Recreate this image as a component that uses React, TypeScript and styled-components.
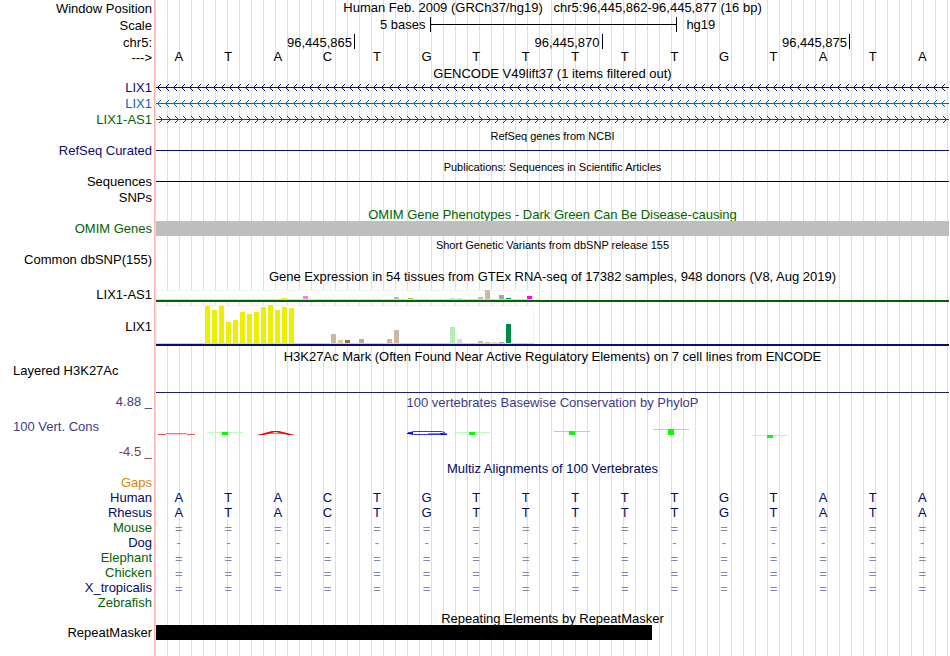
import React from "react";
import styled, { createGlobalStyle } from "styled-components";

const NAVY = "#0c0c78";
const BLUE = "#1464b4";
const GREEN = "#006400";
const INK = "#000a64";

const GlobalStyle = createGlobalStyle`
  body {
    margin: 0;
    background: #fff;
    color: #000;
    font: 13px/15px "Liberation Sans", Arial, Helvetica, sans-serif;
  }
`;

const Browser = styled.main`
  box-sizing: border-box;
  min-height: 100vh;
  padding-right: 1px;
  background:
    linear-gradient(to right, #fff 154px, #ffb4b4 154px, #ffb4b4 155px, transparent 155px),
    linear-gradient(to right, transparent 11px, #dcdcf5 11px) 156px 0 / 12px 100%;
`;

const Row = styled.section<{ $h: number }>`
  display: grid;
  grid-template-columns: 154px minmax(0, 1fr);
  align-items: start;
  height: ${(p) => p.$h}px;
`;

const Label = styled.div<{ $line?: number; $color?: string; $left?: boolean }>`
  padding: 0 2px 0 13px;
  text-align: ${(p) => (p.$left ? "left" : "right")};
  line-height: ${(p) => p.$line ?? 15}px;
  color: ${(p) => p.$color ?? "#000"};
  white-space: pre;
`;

const LabelStack = styled.div`
  display: flex;
  flex-direction: column;
  gap: 10px;
  padding-top: 1px;
`;

const Track = styled.div`
  grid-column: 2;
  padding-left: 2px;
`;

const Title = styled.h2<{ $line?: number; $color?: string; $small?: boolean; $clip?: boolean }>`
  margin: 0;
  height: ${(p) => (p.$clip ? "14px" : "auto")};
  overflow: ${(p) => (p.$clip ? "hidden" : "visible")};
  font-weight: normal;
  font-size: ${(p) => (p.$small ? 11 : 13)}px;
  line-height: ${(p) => p.$line ?? (p.$small ? 17 : 15)}px;
  color: ${(p) => p.$color ?? "#000"};
  text-align: center;
  white-space: pre;
`;

const ScaleRow = styled.div`
  grid-column: 2;
  display: grid;
  grid-template-columns: 554fr 500fr 546fr;
  padding: 0 1px;
`;

const ScaleUnit = styled.span`
  padding-right: 4px;
  text-align: right;
`;

const ScaleBar = styled.span`
  display: flex;
  align-items: center;
  height: 15px;
  border: solid #000;
  border-width: 0 1px;

  &::before {
    content: "";
    flex: 1;
    height: 1px;
    background: #000;
  }
`;

const Assembly = styled.span`
  padding-left: 9px;
`;

const Ruler = styled.div`
  grid-column: 2;
  display: grid;
  grid-template-columns: 4fr 5fr 5fr 2fr;
  padding-left: 3px;
`;

const RulerMark = styled.span`
  height: 15px;
  padding-right: 2px;
  border-right: 1px solid #000;
  line-height: 17px;
  text-align: right;
`;

const BaseRow = styled.div<{ $color?: string; $line?: number }>`
  grid-column: 2;
  display: grid;
  grid-template-columns: repeat(16, 1fr);
  padding-right: 2px;
  color: ${(p) => p.$color ?? "#000"};
  line-height: ${(p) => p.$line ?? 15}px;
  text-align: center;
`;

const Rule = styled.div<{ $color: string; $top: number }>`
  margin-top: ${(p) => p.$top}px;
  height: 1px;
  background: ${(p) => p.$color};
`;

const Block = styled.div<{ $color: string; $width: string }>`
  width: ${(p) => p.$width};
  height: 15px;
  background: ${(p) => p.$color};
`;

const Drawing = styled.svg`
  display: block;
`;

const Expression = styled.div<{ $top: number; $color: string }>`
  padding-top: ${(p) => p.$top}px;
  border-bottom: 2px solid ${(p) => p.$color};
`;

const LogoRow = styled.div`
  display: grid;
  grid-template-columns: repeat(16, minmax(0, 1fr));
`;

const LogoCell = styled.span`
  padding-left: 1px;
`;

const SEQUENCE = "ATACTGTTTTTGTATA".split("");

function Bases({ items, color, line }: { items: string[]; color?: string; line?: number }) {
  return (
    <BaseRow $color={color} $line={line}>
      {items.map((b, i) => (
        <span key={i}>{b}</span>
      ))}
    </BaseRow>
  );
}

function Gene({ id, name, color, forward }: { id: string; name: string; color: string; forward?: boolean }) {
  return (
    <Row $h={16}>
      <Label $color={color}>{name}</Label>
      <Track>
        <Drawing width="100%" height="15" aria-hidden="true">
          <defs>
            <pattern id={id} width="8" height="15" patternUnits="userSpaceOnUse">
              <path
                d={forward ? "M3 4L6.5 7.5L3 11" : "M5 4L1.5 7.5L5 11"}
                fill="none"
                stroke={color}
              />
              <rect y="7" width="8" height="1" fill={color} />
            </pattern>
          </defs>
          <rect width="100%" height="15" fill={`url(#${id})`} />
        </Drawing>
      </Track>
    </Row>
  );
}

type Bar = [slot: number, height: number, color: string];

const YELLOW = "#eeee00";
const TAN = "#cdb79e";

const AS1_BARS: Bar[] = [
  [18, 1, YELLOW], [21, 3, "#ee82ee"], [34, 2, TAN], [36, 1, "#9acd32"],
  [42, 1, "#b4eeb4"], [43, 1, "#d9d9d9"], [46, 2, TAN], [47, 9, TAN],
  [49, 4, "#a6a6a6"], [50, 1, "#008b45"], [53, 3, "#ff00ff"],
];

const LIX1_BARS: Bar[] = [
  ...[37, 33, 37, 21, 23, 31, 29, 31, 36, 38, 33, 36, 35].map((h, i): Bar => [7 + i, h, YELLOW]),
  [25, 9, TAN], [26, 3, "#eec591"], [27, 3, "#8b7355"], [29, 4, "#cdaa7d"],
  [33, 4, TAN], [34, 13, TAN], [42, 16, "#b4eeb4"], [43, 4, "#d9d9d9"],
  [46, 2, TAN], [47, 1, TAN], [48, 1, "#ffd39b"], [49, 1, "#a6a6a6"], [50, 19, "#008b45"],
];

function BarChart({ bars, height }: { bars: Bar[]; height: number }) {
  return (
    <Drawing width="378" height={height} aria-hidden="true">
      <rect x="0.5" y="0.5" width="377" height={height} fill="#fff" stroke="#f2f2f2" />
      <rect y={height - 1} width="378" height="1" fill="#d3d3d3" />
      {bars.map(([slot, h, color]) => (
        <rect key={slot} x={slot * 7} y={height - 1 - h} width="5" height={h} fill={color} />
      ))}
    </Drawing>
  );
}

function LogoT({ y, h, faint }: { y: number; h: number; faint?: boolean }) {
  return (
    <>
      <rect y={y} width="36" height="1" fill={faint ? "#b9ffb9" : "#78ff78"} />
      <rect x="15" y={y} width="6" height={h} fill="#00ff00" />
    </>
  );
}

const LOGOS: Record<number, React.ReactNode> = {
  0: (
    <g fill="none" stroke="#ff0000">
      <path d="M1 22.5H9" strokeOpacity="0.7" />
      <path d="M9 21.6H30" strokeOpacity="0.6" />
      <path d="M30 22.5H38" strokeOpacity="0.7" />
      <path d="M11 22.5H28" strokeOpacity="0.15" />
    </g>
  ),
  1: <LogoT y={20} h={3} faint />,
  2: (
    <>
      <path d="M1 23L16 19H23L39 23H32L19.5 20L8 23Z" fill="#ff0000" />
      <path d="M11 21.5H29" stroke="#ff0000" strokeOpacity="0.5" />
    </>
  ),
  5: (
    <>
      <path
        d="M40 20.5L36 19.5H9L3 21L9 22.5H41"
        fill="none"
        stroke="#0000ff"
        strokeOpacity="0.8"
      />
      <path d="M2 21L8 20V22.5L2 22ZM35 21L42 21.5V23H36Z" fill="#0000ff" />
      <path d="M23 21.5H38" stroke="#0000ff" strokeOpacity="0.5" />
    </>
  ),
  6: <LogoT y={20} h={3} faint />,
  8: <LogoT y={19} h={4} />,
  10: <LogoT y={17} h={6} />,
  12: <LogoT y={23} h={3} faint />,
};

const SPECIES: [name: string, color: string, symbol: string][] = [
  ["Gaps", "#e68200", ""],
  ["Human", INK, "seq"],
  ["Rhesus", INK, "seq"],
  ["Mouse", GREEN, "="],
  ["Dog", INK, "-"],
  ["Elephant", GREEN, "="],
  ["Chicken", GREEN, "="],
  ["X_tropicalis", INK, "="],
  ["Zebrafish", GREEN, ""],
];

export default function App() {
  return (
    <>
      <GlobalStyle />
      <Browser>
        <Row $h={17}>
          <Label $line={17}>Window Position</Label>
          <Track>
            <Title>{"Human Feb. 2009 (GRCh37/hg19)   chr5:96,445,862-96,445,877 (16 bp)"}</Title>
          </Track>
        </Row>
        <Row $h={17}>
          <Label $line={17}>Scale</Label>
          <ScaleRow>
            <ScaleUnit>5 bases</ScaleUnit>
            <ScaleBar />
            <Assembly>hg19</Assembly>
          </ScaleRow>
        </Row>
        <Row $h={15}>
          <Label $line={17}>chr5:</Label>
          <Ruler>
            <RulerMark>96,445,865</RulerMark>
            <RulerMark>96,445,870</RulerMark>
            <RulerMark>96,445,875</RulerMark>
          </Ruler>
        </Row>
        <Row $h={17}>
          <Label $line={17}>{"--->"}</Label>
          <Bases items={SEQUENCE} />
        </Row>

        <Row $h={14}>
          <Track>
            <Title>GENCODE V49lift37 (1 items filtered out)</Title>
          </Track>
        </Row>
        <Gene id="lix1-coding" name="LIX1" color={NAVY} />
        <Gene id="lix1-other" name="LIX1" color={BLUE} />
        <Gene id="lix1-as1" name="LIX1-AS1" color={GREEN} forward />

        <Row $h={15}>
          <Track>
            <Title $small>RefSeq genes from NCBI</Title>
          </Track>
        </Row>
        <Row $h={16}>
          <Label $color={NAVY}>RefSeq Curated</Label>
          <Track>
            <Rule $color={NAVY} $top={7} />
          </Track>
        </Row>

        <Row $h={15}>
          <Track>
            <Title $small>Publications: Sequences in Scientific Articles</Title>
          </Track>
        </Row>
        <Row $h={16}>
          <Label>Sequences</Label>
          <Track>
            <Rule $color="#000" $top={7} />
          </Track>
        </Row>
        <Row $h={17}>
          <Label>SNPs</Label>
        </Row>

        <Row $h={14}>
          <Track>
            <Title $color={GREEN} $clip>
              OMIM Gene Phenotypes - Dark Green Can Be Disease-causing
            </Title>
          </Track>
        </Row>
        <Row $h={16}>
          <Label $color={GREEN}>OMIM Genes</Label>
          <Track>
            <Block $color="#bebebe" $width="100%" />
          </Track>
        </Row>

        <Row $h={15}>
          <Track>
            <Title $small>Short Genetic Variants from dbSNP release 155</Title>
          </Track>
        </Row>
        <Row $h={17}>
          <Label>Common dbSNP(155)</Label>
        </Row>

        <Row $h={16}>
          <Track>
            <Title>Gene Expression in 54 tissues from GTEx RNA-seq of 17382 samples, 948 donors (V8, Aug 2019)</Title>
          </Track>
        </Row>
        <Row $h={17}>
          <Label $line={19}>LIX1-AS1</Label>
          <Track>
            <Expression $top={5} $color={GREEN}>
              <BarChart bars={AS1_BARS} height={10} />
            </Expression>
          </Track>
        </Row>
        <Row $h={47}>
          <Label $line={49}>LIX1</Label>
          <Track>
            <Expression $top={3} $color={NAVY}>
              <BarChart bars={LIX1_BARS} height={39} />
            </Expression>
          </Track>
        </Row>

        <Row $h={14}>
          <Track>
            <Title>H3K27Ac Mark (Often Found Near Active Regulatory Elements) on 7 cell lines from ENCODE</Title>
          </Track>
        </Row>
        <Row $h={30}>
          <Label $left>Layered H3K27Ac</Label>
          <Track>
            <Rule $color="#1e1e6e" $top={29} />
          </Track>
        </Row>

        <Row $h={68}>
          <LabelStack>
            <Label $color="#3c3c8c">4.88 _</Label>
            <Label $color="#3c3c8c" $left>
              100 Vert. Cons
            </Label>
            <Label $color="#823c3c">-4.5 _</Label>
          </LabelStack>
          <Track>
            <Title $line={19} $color="#3c3c8c">
              100 vertebrates Basewise Conservation by PhyloP
            </Title>
            <LogoRow>
              {SEQUENCE.map((_, i) => (
                <LogoCell key={i}>
                  <Drawing width="44" height="30" aria-hidden="true">
                    {LOGOS[i]}
                  </Drawing>
                </LogoCell>
              ))}
            </LogoRow>
          </Track>
        </Row>

        <Row $h={14}>
          <Track>
            <Title $color={INK}>Multiz Alignments of 100 Vertebrates</Title>
          </Track>
        </Row>
        {SPECIES.map(([name, color, symbol]) => (
          <Row key={name} $h={15}>
            <Label $color={color}>{name}</Label>
            {symbol === "seq" && <Bases items={SEQUENCE} color={INK} />}
            {symbol !== "seq" && symbol !== "" && (
              <Bases items={SEQUENCE.map(() => symbol)} color="#8085b2" line={symbol === "=" ? 17 : 15} />
            )}
          </Row>
        ))}

        <Row $h={15}>
          <Track>
            <Title $line={17}>Repeating Elements by RepeatMasker</Title>
          </Track>
        </Row>
        <Row $h={15}>
          <Label>RepeatMasker</Label>
          <Track>
            <Block $color="#000" $width="62.5%" />
          </Track>
        </Row>
      </Browser>
    </>
  );
}
